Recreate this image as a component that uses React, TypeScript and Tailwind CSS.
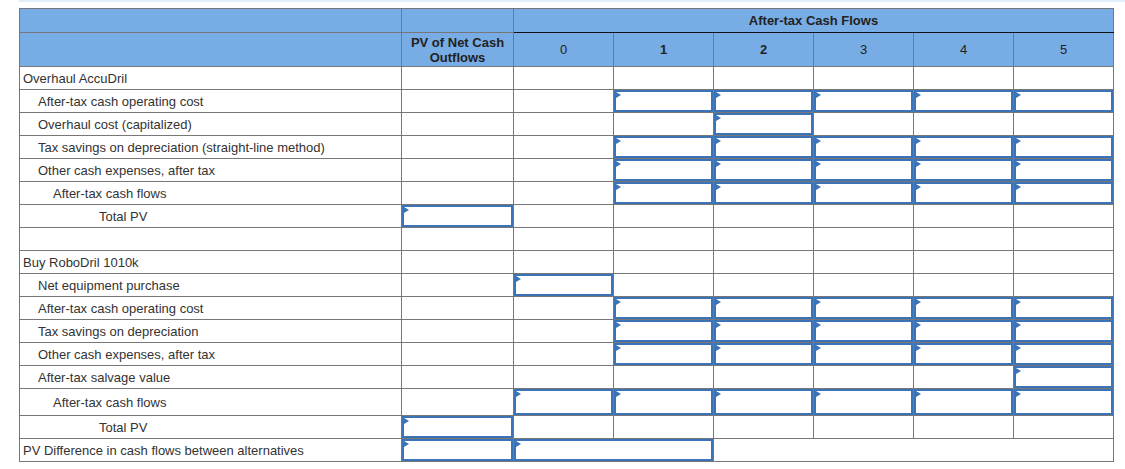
import React from 'react';

type Row = {
  label: string;
  indent: 0 | 1 | 2 | 3;
  inputs: number[]; // 0 = PV column, 1..6 = years 0..5
  tall?: boolean;
};

const rows: Row[] = [
  { label: 'Overhaul AccuDril', indent: 0, inputs: [] },
  { label: 'After-tax cash operating cost', indent: 1, inputs: [2, 3, 4, 5, 6] },
  { label: 'Overhaul cost (capitalized)', indent: 1, inputs: [3] },
  { label: 'Tax savings on depreciation (straight-line method)', indent: 1, inputs: [2, 3, 4, 5, 6] },
  { label: 'Other cash expenses, after tax', indent: 1, inputs: [2, 3, 4, 5, 6] },
  { label: 'After-tax cash flows', indent: 2, inputs: [2, 3, 4, 5, 6] },
  { label: 'Total PV', indent: 3, inputs: [0] },
  { label: '', indent: 0, inputs: [] },
  { label: 'Buy RoboDril 1010k', indent: 0, inputs: [] },
  { label: 'Net equipment purchase', indent: 1, inputs: [1] },
  { label: 'After-tax cash operating cost', indent: 1, inputs: [2, 3, 4, 5, 6] },
  { label: 'Tax savings on depreciation', indent: 1, inputs: [2, 3, 4, 5, 6] },
  { label: 'Other cash expenses, after tax', indent: 1, inputs: [2, 3, 4, 5, 6] },
  { label: 'After-tax salvage value', indent: 1, inputs: [6] },
  { label: 'After-tax cash flows', indent: 2, inputs: [1, 2, 3, 4, 5, 6], tall: true },
  { label: 'Total PV', indent: 3, inputs: [0] },
];

const indentClass = ['pl-[3px]', 'pl-[18px]', 'pl-[33px]', 'pl-[79px]'];

const cell = 'border border-[#777] p-0';
const head = 'border border-[#777] bg-[#78ace4] p-0 text-center text-[#222]';

function InputBox({ tall }: { tall?: boolean }) {
  return (
    <div className={`${tall ? 'h-[26px]' : 'h-[22px]'} w-full border-2 border-[#3b73b9] bg-white`}>
      <div className="h-0 w-0 border-y-[3px] border-l-[5px] border-y-transparent border-l-[#3b73b9]" />
    </div>
  );
}

export default function App() {
  return (
    <div
      className="min-h-[469px] w-[1125px] bg-white pl-[19px]"
      style={{ fontFamily: '"Liberation Sans", Arial, sans-serif' }}
    >
      <div className="h-[2px] bg-[#dfeefa]" />
      <table className="mt-[6px] table-fixed border-collapse text-[13px] leading-[15px] text-[#333]">
        <colgroup>
          <col className="w-[382px]" />
          <col className="w-[112px]" />
          <col className="w-[100px]" />
          <col className="w-[100px]" />
          <col className="w-[100px]" />
          <col className="w-[100px]" />
          <col className="w-[100px]" />
          <col className="w-[100px]" />
        </colgroup>
        <thead>
          <tr className="h-[24px]">
            <td className={head} />
            <td className={head} />
            <td colSpan={6} className={`${head} border-b-[#111] font-bold`}>
              After-tax Cash Flows
            </td>
          </tr>
          <tr className="h-[34px]">
            <td className={head} />
            <td className={`${head} font-bold`}>
              PV of Net Cash
              <br />
              Outflows
            </td>
            <td className={head}>0</td>
            <td className={`${head} font-bold`}>1</td>
            <td className={`${head} font-bold`}>2</td>
            <td className={head}>3</td>
            <td className={head}>4</td>
            <td className={head}>5</td>
          </tr>
        </thead>
        <tbody>
          {rows.map((r, i) => (
            <tr key={i} className={r.tall ? 'h-[27px]' : 'h-[23px]'}>
              <td className={`${cell} ${indentClass[r.indent]} whitespace-nowrap`}>{r.label}</td>
              {[0, 1, 2, 3, 4, 5, 6].map((c) => (
                <td key={c} className={cell}>
                  {r.inputs.includes(c) && <InputBox tall={r.tall} />}
                </td>
              ))}
            </tr>
          ))}
          <tr className="h-[23px]">
            <td className={`${cell} pl-[3px] whitespace-nowrap`}>
              PV Difference in cash flows between alternatives
            </td>
            <td className={cell}>
              <InputBox />
            </td>
            <td colSpan={2} className={cell}>
              <InputBox />
            </td>
            <td colSpan={4} className={cell} />
          </tr>
        </tbody>
      </table>
    </div>
  );
}
